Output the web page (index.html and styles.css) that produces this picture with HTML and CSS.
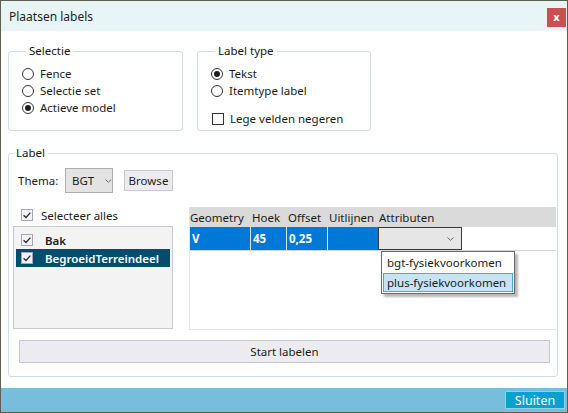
FILE: index.html
```html
<!DOCTYPE html>
<html>
<head>
<meta charset="utf-8">
<title>Plaatsen labels</title>
<link rel="stylesheet" href="styles.css">
</head>
<body>
<div class="window">
  <div class="titlebar">
    <span class="title">Plaatsen labels</span>
    <span class="close">x</span>
  </div>
  <div class="content">
    <div class="top-row">
      <fieldset class="group group-selectie">
        <legend>Selectie</legend>
        <div class="opt"><span class="radio"></span>Fence</div>
        <div class="opt"><span class="radio"></span>Selectie set</div>
        <div class="opt"><span class="radio checked"></span>Actieve model</div>
      </fieldset>
      <fieldset class="group group-type">
        <legend>Label type</legend>
        <div class="opt"><span class="radio checked"></span>Tekst</div>
        <div class="opt"><span class="radio"></span>Itemtype label</div>
        <div class="opt opt-check"><span class="check"></span>Lege velden negeren</div>
      </fieldset>
    </div>
    <fieldset class="group group-label">
      <legend>Label</legend>
      <div class="thema-row">
        <span class="thema-label">Thema:</span>
        <div class="combo">
          <span>BGT</span>
          <svg class="chev" width="7" height="4" viewBox="0 0 7 4"><path d="M0.5 0.5 L3.5 3.3 L6.5 0.5" fill="none" stroke="#6a6a6a" stroke-width="1"/></svg>
        </div>
        <div class="btn browse">Browse</div>
      </div>
      <div class="main-row">
        <div class="left-col">
          <div class="opt select-all"><span class="check checked"><svg width="10" height="10" viewBox="0 0 10 10"><path d="M1.6 5.2 L4 7.5 L8.4 2.6" fill="none" stroke="#2a2a2a" stroke-width="1.3"/></svg></span>Selecteer alles</div>
          <div class="listbox">
            <div class="item"><span class="check checked"><svg width="10" height="10" viewBox="0 0 10 10"><path d="M1.6 5.2 L4 7.5 L8.4 2.6" fill="none" stroke="#2a2a2a" stroke-width="1.3"/></svg></span><span class="item-text">Bak</span></div>
            <div class="item selected"><span class="check checked"><svg width="10" height="10" viewBox="0 0 10 10"><path d="M1.6 5.2 L4 7.5 L8.4 2.6" fill="none" stroke="#2a2a2a" stroke-width="1.3"/></svg></span><span class="item-text">BegroeidTerreindeel</span></div>
          </div>
        </div>
        <div class="grid">
          <div class="grid-head">
            <span class="c c1">Geometry</span>
            <span class="c c2">Hoek</span>
            <span class="c c3">Offset</span>
            <span class="c c4">Uitlijnen</span>
            <span class="c c5">Attributen</span>
          </div>
          <div class="grid-row">
            <span class="c c1 cell">V</span>
            <span class="c c2 cell">45</span>
            <span class="c c3 cell">0,25</span>
            <span class="c c4 cell"></span>
            <span class="c5 cell-combo">
              <svg class="chev" width="7" height="4" viewBox="0 0 7 4"><path d="M0.5 0.5 L3.5 3.3 L6.5 0.5" fill="none" stroke="#6a6a6a" stroke-width="1"/></svg>
            </span>
          </div>
          <div class="popup">
            <div class="popup-item">bgt-fysiekvoorkomen</div>
            <div class="popup-item hl">plus-fysiekvoorkomen</div>
          </div>
        </div>
      </div>
      <div class="btn start">Start labelen</div>
    </fieldset>
  </div>
  <div class="footer">
    <div class="sluiten">Sluiten</div>
  </div>
</div>
</body>
</html>
```

FILE: styles.css
```css
* { box-sizing: border-box; }
html, body { margin: 0; padding: 0; }
body {
  width: 568px;
  height: 413px;
  font-family: "Noto Sans", "Open Sans", sans-serif;
  font-size: 11.5px;
  color: #1b1b1b;
  background: #ffffff;
}
.window {
  width: 568px;
  height: 413px;
  border: 1px solid #5f5f50;
  display: flex;
  flex-direction: column;
  background: #ffffff;
}
.titlebar {
  height: 30px;
  flex: none;
  background: #e8f5f7;
  display: flex;
  align-items: center;
  padding: 0 1px 0 8px;
}
.title {
  font-size: 12px;
  color: #1e1e1e;
}
.close {
  margin-left: auto;
  align-self: flex-start;
  margin-top: 7px;
  width: 19px;
  height: 19px;
  background: #c9504f;
  color: #ffffff;
  font-weight: bold;
  font-size: 11px;
  line-height: 17px;
  text-align: center;
}
.content {
  flex: 1;
  padding: 12px 0 0 7px;
}
.top-row {
  display: flex;
  gap: 14px;
  height: 88px;
}
.group {
  margin: 0;
  padding: 0;
  border: 1px solid #d3dae2;
  border-radius: 3px;
  min-width: 0;
}
.group legend {
  padding: 0 3px;
  margin-left: 4px;
  line-height: 16px;
  font-size: 11.5px;
  color: #141414;
}
.group-selectie {
  width: 175px;
  padding: 6px 0 0 13px;
}
.group-type {
  width: 174px;
  padding: 6px 0 0 13px;
}
.opt {
  display: flex;
  align-items: center;
  height: 17px;
  gap: 6px;
  white-space: nowrap;
}
.opt-check {
  margin-top: 11px;
  padding-left: 1px;
}
.radio {
  width: 12px;
  height: 12px;
  border: 1px solid #333333;
  border-radius: 50%;
  background: #ffffff;
  display: flex;
  align-items: center;
  justify-content: center;
  flex: none;
}
.radio.checked::after {
  content: "";
  width: 6px;
  height: 6px;
  border-radius: 50%;
  background: #1e1e1e;
}
.check {
  width: 12px;
  height: 12px;
  border: 1px solid #333333;
  background: #ffffff;
  flex: none;
  display: flex;
  align-items: center;
  justify-content: center;
}
.check.checked {
  border-color: #a6a6bb;
  background: #f3f3f7;
}
.group-label {
  margin-top: 14px;
  width: 550px;
  height: 232px;
  padding: 0;
}
.thema-row {
  display: flex;
  align-items: center;
  margin-top: 7px;
  padding-left: 9px;
  height: 25px;
}
.thema-label {
  width: 47px;
}
.combo {
  width: 48px;
  height: 25px;
  border: 1px solid #adadad;
  background: #e3e3e3;
  display: flex;
  align-items: center;
  padding-left: 6px;
}
.combo .chev {
  margin-left: 11px;
}
.btn {
  background: #ececf0;
  border: 1px solid #c7c7d6;
  display: flex;
  align-items: center;
  justify-content: center;
}
.browse {
  margin-left: 11px;
  width: 49px;
  height: 21px;
}
.main-row {
  display: flex;
  margin-top: 14px;
  gap: 16px;
  padding-left: 4px;
}
.left-col {
  width: 160px;
  flex: none;
}
.select-all {
  margin-top: 1px;
  height: 14px;
  padding-left: 8px;
  gap: 8px;
  margin-bottom: 4px;
}
.listbox {
  height: 103px;
  border: 1px solid #c8c8d8;
  background: #f3f3f3;
  padding: 4px 2px 0 2px;
}
.item {
  height: 18px;
  display: flex;
  align-items: center;
  padding-left: 5px;
  font-weight: 600;
}
.item .check {
  margin-right: 12px;
}
.item.selected {
  background: #024d6d;
  color: #ffffff;
}
.grid {
  position: relative;
  width: 367px;
  height: 123px;
  border-left: 1px solid #e6e6e6;
  border-bottom: 1px solid #e6e6e6;
  background: #ffffff;
}
.grid-head {
  height: 20px;
  background: #dadada;
  display: flex;
  align-items: center;
}
.c {
  padding-left: 1px;
  white-space: nowrap;
  flex: none;
}
.c1 { width: 61px; padding-left: 0; }
.c2 { width: 36px; }
.c3 { width: 41px; }
.c4 { width: 50px; }
.c5 { width: 84px; }
.grid-row {
  height: 24px;
  display: flex;
  border-bottom: 1px solid #d6d6d6;
}
.cell {
  background: #0078d7;
  color: #ffffff;
  font-weight: 700;
  border-right: 1px solid #e3e3e3;
  padding-left: 2px;
  display: flex;
  align-items: center;
}
.c1.cell { padding-left: 2px; }
.c4.cell { border-right: none; width: 50px; }
.cell-combo {
  flex: none;
  width: 84px;
  border: 1px solid #3a3a3a;
  background: #e6e6e6;
  display: flex;
  align-items: center;
  justify-content: flex-end;
  padding-right: 7px;
}
.popup {
  position: absolute;
  left: 191px;
  top: 44px;
  width: 134px;
  height: 43px;
  border: 1px solid #6a6a6a;
  background: #ffffff;
  box-shadow: 3px 3px 2px rgba(0, 0, 0, 0.28);
  padding: 1px;
}
.popup-item {
  height: 19px;
  line-height: 17px;
  padding-left: 3px;
  border: 1px solid transparent;
  white-space: nowrap;
}
.popup-item.hl {
  margin-top: 1px;
  background: #c5e5f7;
  border-color: #4aa8e0;
}
.start {
  margin: 10px 0 0 10px;
  width: 531px;
  height: 23px;
}
.footer {
  height: 24px;
  flex: none;
  background: #79bddd;
  display: flex;
  justify-content: flex-end;
  padding: 3px 2px 0 0;
}
.sluiten {
  width: 60px;
  height: 18px;
  background: #08a0cf;
  border: 1px solid #8fd0e8;
  color: #ffffff;
  font-size: 12.5px;
  display: flex;
  align-items: center;
  justify-content: center;
}
```
